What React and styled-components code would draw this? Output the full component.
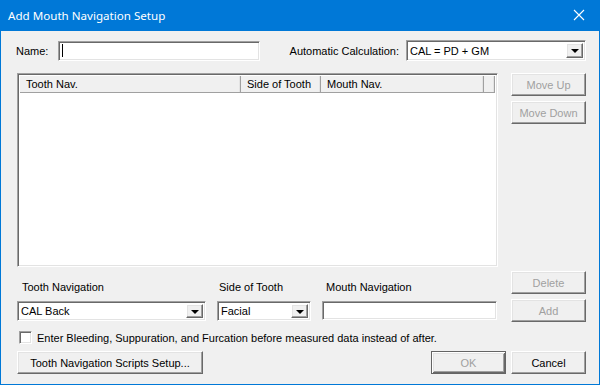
import React from "react";
import styled, { createGlobalStyle, css } from "styled-components";

const Global = createGlobalStyle`
  html, body { margin: 0; padding: 0; background: #f0f0f0; }
  body { font-family: "Liberation Sans", Arial, sans-serif; font-size: 11px; color: #000; }
  * { box-sizing: border-box; }
`;

const sunken = css`
  border: 1px solid;
  border-color: #a0a0a0 #ffffff #ffffff #a0a0a0;
  box-shadow: inset 1px 1px 0 #696969, inset -1px -1px 0 #e3e3e3;
`;

const raised = css`
  border: 1px solid;
  border-color: #ffffff #696969 #696969 #ffffff;
  box-shadow: inset -1px -1px 0 #a0a0a0, inset 1px 1px 0 #e3e3e3;
`;

const Window = styled.div`
  width: 600px;
  height: 385px;
  display: flex;
  flex-direction: column;
  background: #f0f0f0;
  border: 1px solid #0078d7;
  border-top: none;
  overflow: hidden;
`;

const TitleBar = styled.div`
  height: 31px;
  margin: 0 -1px;
  background: #0078d7;
  display: flex;
  align-items: center;
  padding: 0 0 1px 8px;
  flex-shrink: 0;
`;

const Title = styled.span`
  flex: 1;
  color: #fff;
  font-family: "Noto Sans", "Open Sans", sans-serif;
  font-size: 11.6px;
`;

const CloseBox = styled.div`
  width: 46px;
  height: 30px;
  display: flex;
  align-items: center;
  justify-content: center;
  margin-right: -2px;
`;

const Body = styled.div`
  flex: 1;
  display: flex;
  flex-direction: column;
  padding: 0 13px 0 16px;
  font-size: 11px;
`;

const TopRow = styled.div`
  margin-top: 9px;
  display: grid;
  grid-template-columns: 41px 202px 1fr auto 180px;
  align-items: center;
  height: 21px;
`;

const Label = styled.span`
  white-space: nowrap;
  padding-left: ${(p) => p.$indent || 0}px;
  margin-right: ${(p) => p.$gap || 0}px;
  margin-left: ${(p) => p.$shift || 0}px;
`;

const TextBox = styled.div`
  ${sunken};
  background: #fff;
  height: ${(p) => p.$h || 20}px;
  width: ${(p) => (p.$w ? `${p.$w}px` : "auto")};
  display: flex;
  align-items: center;
  padding-left: 3px;
`;

const Caret = styled.span`
  width: 1px;
  height: 13px;
  background: #000;
`;

const ComboBox = styled.div`
  ${sunken};
  background: #fff;
  height: ${(p) => p.$h || 21}px;
  display: flex;
  align-items: stretch;
  padding: 2px;
`;

const ComboText = styled.span`
  flex: 1;
  display: flex;
  align-items: center;
  padding-left: 1px;
  white-space: nowrap;
  overflow: hidden;
`;

const DropButton = styled.span`
  ${raised};
  width: 17px;
  background: #f0f0f0;
  display: flex;
  align-items: center;
  justify-content: center;
`;

const Arrow = styled.span`
  width: 0;
  height: 0;
  border-left: 4px solid transparent;
  border-right: 4px solid transparent;
  border-top: 4px solid #000;
  margin-top: 1px;
`;

const MainGrid = styled.div`
  margin-top: 12px;
  display: grid;
  grid-template-columns: 481px 75px;
  column-gap: 13px;
  align-items: start;
`;

const ListView = styled.div`
  ${sunken};
  background: #fff;
  height: 194px;
  padding: 2px;
  display: flex;
  flex-direction: column;
`;

const HeaderRow = styled.div`
  display: flex;
  height: 17px;
  background: #f0f0f0;
  border-bottom: 1px solid #a0a0a0;
`;

const HeaderCell = styled.div`
  width: ${(p) => (p.$w ? `${p.$w}px` : "auto")};
  flex: ${(p) => (p.$w ? "none" : 1)};
  padding-left: 6px;
  display: flex;
  align-items: center;
  border-right: 1px solid #a0a0a0;
  box-shadow: inset -1px 0 0 #e3e3e3;
  white-space: nowrap;
`;

const ButtonColumn = styled.div`
  display: flex;
  flex-direction: column;
  gap: 5px;
`;

const Button = styled.button`
  ${raised};
  width: ${(p) => p.$w || 75}px;
  height: 23px;
  background: #f0f0f0;
  font: inherit;
  color: ${(p) => (p.disabled ? "#a0a0a0" : "#000")};
  padding: 0;
  margin: 0;
  ${(p) =>
    p.$default &&
    css`
      border: 1px solid #646464;
      box-shadow: inset 1px 1px 0 #fff, inset -1px -1px 0 #696969,
        inset 2px 2px 0 #e3e3e3, inset -2px -2px 0 #a0a0a0;
    `}
`;

const FieldsGrid = styled.div`
  margin-top: 4px;
  display: grid;
  grid-template-columns: 481px 75px;
  column-gap: 13px;
`;

const Fields = styled.div`
  display: grid;
  grid-template-columns: 189px 94px 175px;
  column-gap: 11px;
  padding-top: 10px;
`;

const Field = styled.div`
  display: flex;
  flex-direction: column;
  gap: 7px;
`;

const FieldLabel = styled.span`
  height: 13px;
  line-height: 13px;
  padding-left: ${(p) => p.$indent || 0}px;
  white-space: nowrap;
`;

const CheckRow = styled.label`
  margin-top: 9px;
  display: flex;
  align-items: center;
  gap: 5px;
  padding-left: 2px;
  height: 13px;
`;

const CheckBox = styled.span`
  ${sunken};
  width: 13px;
  height: 13px;
  background: #fff;
`;

const BottomRow = styled.div`
  margin-top: 7px;
  display: flex;
  gap: 5px;
`;

const Spacer = styled.div`
  flex: 1;
`;

function Combo({ value, h }) {
  return (
    <ComboBox $h={h}>
      <ComboText>{value}</ComboText>
      <DropButton>
        <Arrow />
      </DropButton>
    </ComboBox>
  );
}

export default function App() {
  return (
    <>
      <Global />
      <Window>
        <TitleBar>
          <Title>Add Mouth Navigation Setup</Title>
          <CloseBox>
            <svg width="12" height="12" viewBox="0 0 12 12">
              <path d="M1 1 L11 11 M11 1 L1 11" stroke="#fff" strokeWidth="1.1" fill="none" />
            </svg>
          </CloseBox>
        </TitleBar>
        <Body>
          <TopRow>
            <Label $shift={-1}>Name:</Label>
            <TextBox $w={202}>
              <Caret />
            </TextBox>
            <span />
            <Label $gap={7}>Automatic Calculation:</Label>
            <Combo value="CAL = PD + GM" />
          </TopRow>
          <MainGrid>
            <ListView>
              <HeaderRow>
                <HeaderCell $w={221}>Tooth Nav.</HeaderCell>
                <HeaderCell $w={80}>Side of Tooth</HeaderCell>
                <HeaderCell $w={163}>Mouth Nav.</HeaderCell>
                <HeaderCell />
              </HeaderRow>
            </ListView>
            <ButtonColumn>
              <Button disabled>Move Up</Button>
              <Button disabled>Move Down</Button>
            </ButtonColumn>
          </MainGrid>
          <FieldsGrid>
            <Fields>
              <Field>
                <FieldLabel $indent={5}>Tooth Navigation</FieldLabel>
                <Combo value="CAL Back" h={20} />
              </Field>
              <Field>
                <FieldLabel $indent={2}>Side of Tooth</FieldLabel>
                <Combo value="Facial" h={20} />
              </Field>
              <Field>
                <FieldLabel $indent={4}>Mouth Navigation</FieldLabel>
                <TextBox $h={19} />
              </Field>
            </Fields>
            <ButtonColumn>
              <Button disabled>Delete</Button>
              <Button disabled>Add</Button>
            </ButtonColumn>
          </FieldsGrid>
          <CheckRow>
            <CheckBox />
            <span>Enter Bleeding, Suppuration, and Furcation before measured data instead of after.</span>
          </CheckRow>
          <BottomRow>
            <Button $w={186}>Tooth Navigation Scripts Setup...</Button>
            <Spacer />
            <Button disabled $default>OK</Button>
            <Button>Cancel</Button>
          </BottomRow>
        </Body>
      </Window>
    </>
  );
}
